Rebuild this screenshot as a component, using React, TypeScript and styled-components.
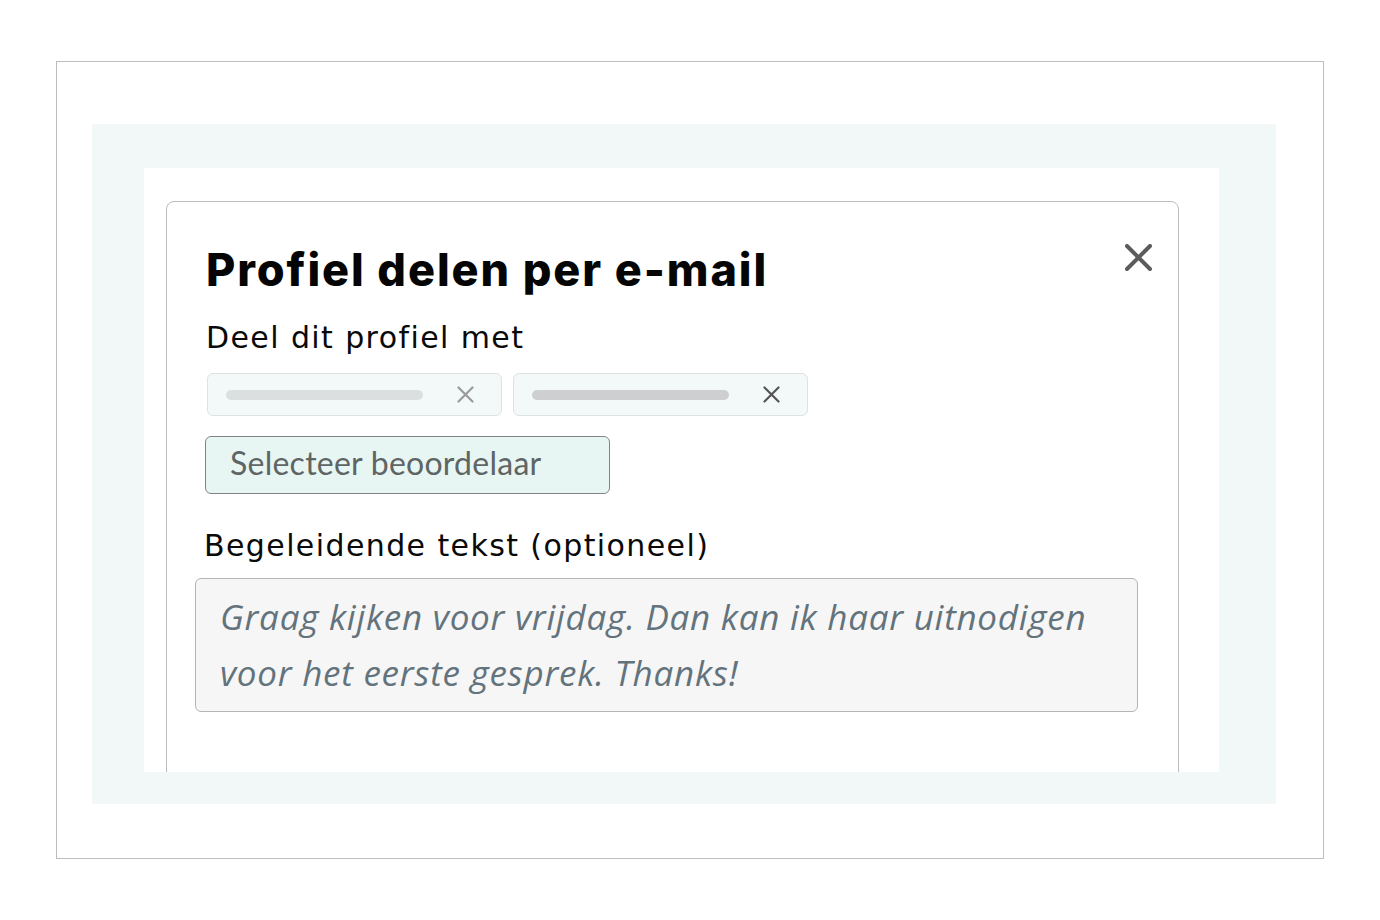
import React from 'react'
import styled, { createGlobalStyle } from 'styled-components'

const GlobalStyle = createGlobalStyle`
  html, body {
    margin: 0;
    padding: 0;
    background: #ffffff;
  }
  * {
    box-sizing: border-box;
  }
`

const Frame = styled.div`
  margin: 61px 0 0 56px;
  width: 1268px;
  height: 798px;
  border: 1px solid #bdbdbd;
  padding: 62px 0 0 35px;
`

const Band = styled.div`
  width: 1184px;
  height: 680px;
  background: #f2f8f8;
  padding: 44px 57px 32px 52px;
`

const Stage = styled.div`
  width: 1075px;
  height: 604px;
  background: #ffffff;
  overflow: hidden;
  padding: 33px 0 0 22px;
`

const Card = styled.section`
  width: 1013px;
  min-height: 720px;
  border: 1px solid #bcbcbc;
  border-radius: 8px;
  background: #ffffff;
  padding: 40px 26px 0 39px;
`

const Header = styled.header`
  display: flex;
  justify-content: space-between;
  align-items: flex-start;
`

const Title = styled.h1`
  margin: 0;
  font-family: Inter, 'Noto Sans', sans-serif;
  font-weight: 800;
  font-size: 45px;
  line-height: 56px;
  letter-spacing: 1.9px;
  color: #050505;
`

const CloseButton = styled.button`
  display: flex;
  margin: 2px 0 0 0;
  padding: 0;
  border: none;
  background: none;
  cursor: pointer;
`

const Label = styled.label<{ $shift?: number; $top: number }>`
  display: block;
  margin: ${(p) => p.$top}px 0 0 ${(p) => p.$shift ?? 0}px;
  font-family: 'DejaVu Sans', Inter, sans-serif;
  font-weight: 400;
  font-size: 30px;
  line-height: 36px;
  letter-spacing: 1.4px;
  color: #0a0a0a;
`

const ChipRow = styled.div`
  display: flex;
  gap: 11px;
  margin: 17px 0 0 1px;
`

const Chip = styled.div`
  display: flex;
  align-items: center;
  width: 295px;
  height: 43px;
  padding: 0 27px 0 18px;
  background: #f3f8f8;
  border: 1px solid #dde3e3;
  border-radius: 6px;
`

const NameBar = styled.span<{ $tone: string }>`
  display: block;
  width: 197px;
  height: 10px;
  border-radius: 5px;
  background: ${(p) => p.$tone};
`

const ChipRemove = styled.button`
  display: flex;
  margin-left: auto;
  padding: 0;
  border: none;
  background: none;
  cursor: pointer;
`

const SelectBox = styled.div`
  display: flex;
  align-items: center;
  width: 405px;
  height: 58px;
  margin: 20px 0 0 -1px;
  padding: 0 0 5px 24px;
  background: #e8f6f3;
  border: 1px solid #7f8585;
  border-radius: 6px;
  font-family: Lato, 'Open Sans', sans-serif;
  font-size: 32px;
  letter-spacing: 0.25px;
  color: #5f6464;
`

const MessageField = styled.textarea`
  display: block;
  width: 943px;
  height: 134px;
  margin: 14px 0 0 -11px;
  padding: 10px 20px 0 24px;
  background: #f6f6f6;
  border: 1px solid #b5b5b5;
  border-radius: 6px;
  resize: none;
  overflow: hidden;
  font-family: 'Open Sans', Lato, sans-serif;
  font-style: italic;
  font-size: 35px;
  line-height: 56px;
  letter-spacing: 0.75px;
  color: #63737c;

  &::placeholder {
    color: #63737c;
    opacity: 1;
  }
`

const CloseIcon = () => (
  <svg width={27} height={27} viewBox="0 0 27 27">
    <path d="M2 2L25 25M25 2L2 25" stroke="#5c5c5c" strokeWidth={4} strokeLinecap="round" />
  </svg>
)

const SmallX = ({ color }: { color: string }) => (
  <svg width={17} height={17} viewBox="0 0 17 17">
    <path d="M1.5 1.5L15.5 15.5M15.5 1.5L1.5 15.5" stroke={color} strokeWidth={2.2} strokeLinecap="round" />
  </svg>
)

const recipients = [
  { bar: '#dcdfe0', x: '#9a9a9a' },
  { bar: '#cdcfd1', x: '#555555' },
]

export default function App() {
  return (
    <>
      <GlobalStyle />
      <Frame>
        <Band>
          <Stage>
            <Card>
              <Header>
                <Title>Profiel delen per e-mail</Title>
                <CloseButton aria-label="Sluiten">
                  <CloseIcon />
                </CloseButton>
              </Header>
              <Label $top={22}>Deel dit profiel met</Label>
              <ChipRow>
                {recipients.map((r, i) => (
                  <Chip key={i}>
                    <NameBar $tone={r.bar} />
                    <ChipRemove aria-label="Verwijderen">
                      <SmallX color={r.x} />
                    </ChipRemove>
                  </Chip>
                ))}
              </ChipRow>
              <SelectBox>Selecteer beoordelaar</SelectBox>
              <Label $top={34} $shift={-2}>
                Begeleidende tekst (optioneel)
              </Label>
              <MessageField
                placeholder={'Graag kijken voor vrijdag. Dan kan ik haar uitnodigen\nvoor het eerste gesprek. Thanks!'}
              />
            </Card>
          </Stage>
        </Band>
      </Frame>
    </>
  )
}
